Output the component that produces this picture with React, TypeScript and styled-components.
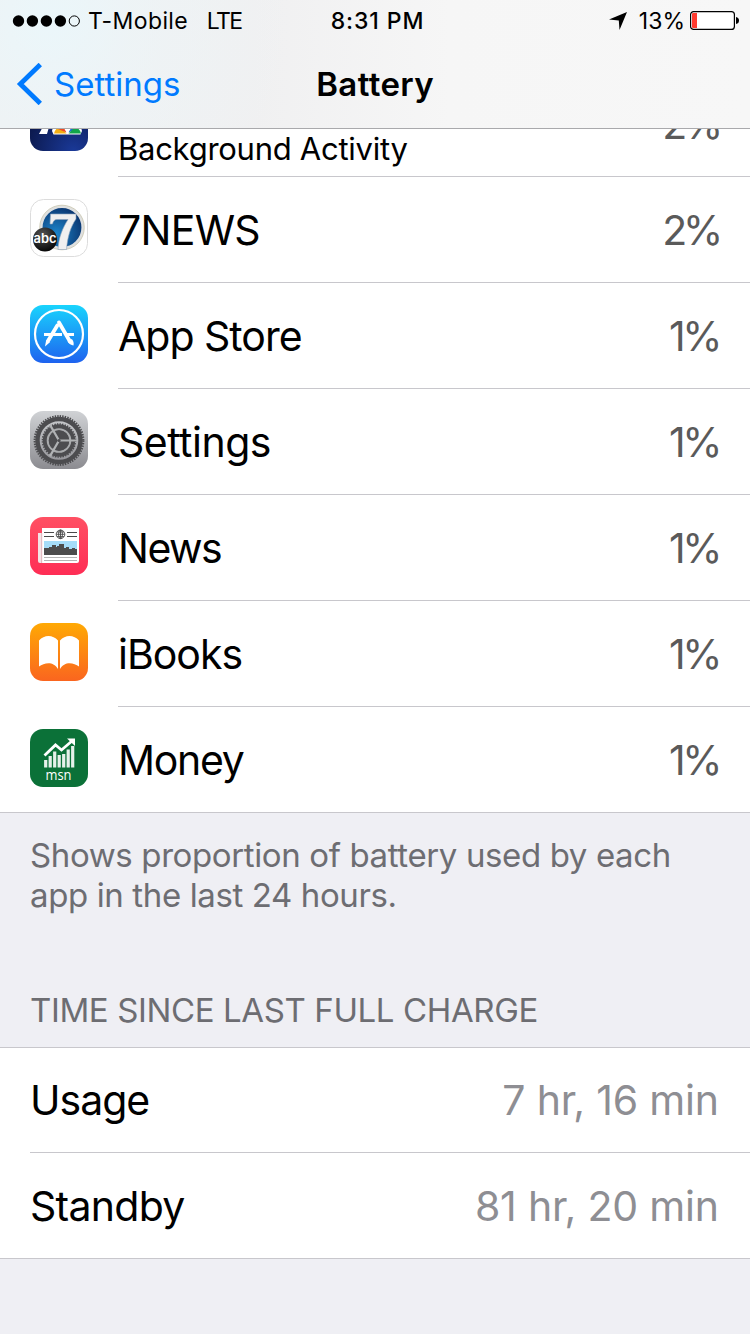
import React from "react";
import styled, { createGlobalStyle } from "styled-components";

const GlobalStyle = createGlobalStyle`
	* {
		box-sizing: border-box;
	}
	body {
		margin: 0;
		background: #efeff4;
	}
`;

const Screen = styled.div`
	display: flex;
	flex-direction: column;
	width: 750px;
	height: 1334px;
	overflow: hidden;
	background: #efeff4;
	color: #000;
	font-family: Inter, "Liberation Sans", sans-serif;
	white-space: nowrap;
`;

const Header = styled.header`
	flex: none;
	height: 129px;
	border-bottom: 1px solid #a9a9ac;
	background: radial-gradient(
			circle at 50px 20px,
			rgba(234, 247, 251, 0.9) 0,
			rgba(236, 245, 248, 0.6) 90px,
			rgba(240, 240, 241, 0) 240px
		),
		linear-gradient(90deg, #f0f1f2 0, #f0f0f1 34%, #f6f6f6 60%, #f7f7f7 100%);
`;

const StatusBar = styled.div`
	display: grid;
	grid-template-columns: 1fr auto 1fr;
	align-items: center;
	height: 41px;
	padding: 0 11px 0 12px;
`;

const StatusGroup = styled.div<{ $end?: boolean }>`
	display: flex;
	align-items: center;
	justify-content: ${({ $end }) => ($end ? "flex-end" : "flex-start")};
`;

interface ILabel {
	readonly $size: number;
	readonly $track?: number;
	readonly $weight?: number;
	readonly $color?: string;
}

const Label = styled.span<ILabel>`
	font-size: ${({ $size }) => $size}px;
	font-weight: ${({ $weight = 400 }) => $weight};
	letter-spacing: ${({ $track = 0 }) => $track}px;
	margin-right: ${({ $track = 0 }) => -$track}px;
	color: ${({ $color = "inherit" }) => $color};
`;

const Carrier = styled(Label)`
	margin-left: 8px;
`;
const Network = styled(Label)`
	margin-left: 19px;
`;
const Clock = styled(Label)`
	margin: 0 0 0 4px;
`;
const Charge = styled(Label)`
	margin: 0 5px 0 12px;
`;

const NavBar = styled.nav`
	display: grid;
	grid-template-columns: 1fr auto 1fr;
	align-items: center;
	height: 86px;
	padding: 0 16px;
`;

const BackButton = styled.a`
	display: flex;
	align-items: center;
	gap: 12px;
	color: #007aff;
`;

const ListView = styled.section<{ $scrolled?: boolean }>`
	flex: none;
	display: flex;
	flex-direction: column;
	background: #fff;
	border-bottom: 1px solid #c8c7cc;
	border-top: ${({ $scrolled }) => ($scrolled ? "none" : "1px solid #c8c7cc")};
	height: ${({ $scrolled }) => ($scrolled ? "684px" : "212px")};
	justify-content: flex-end;
	overflow: hidden;
`;

const Row = styled.div`
	flex: none;
	display: flex;
	height: 106px;
	padding-left: 30px;
	&:last-child {
		height: 105px;
	}
`;

const TimeRow = styled(Row)`
	height: 105px;
`;

const RowIcon = styled.svg`
	flex: none;
	width: 58px;
	height: 58px;
	margin: 22px 30px 0 0;
`;

const RowBody = styled.div`
	flex: 1;
	display: flex;
	align-items: center;
	justify-content: space-between;
	padding-right: 31px;
	border-bottom: 1px solid #c8c7cc;
	${Row}:last-child & {
		border-bottom: none;
	}
`;

const Percent = styled(Label)`
	margin-right: 0;
`;

const Subtitle = styled(Label)`
	align-self: flex-end;
	padding-bottom: 9px;
`;

const Footer = styled.p`
	flex: none;
	height: 176px;
	margin: 0;
	padding: 22px 30px 0;
	font-size: 33px;
	letter-spacing: -0.38px;
	line-height: 40px;
	color: #6d6d72;
`;

const SectionTitle = styled.h2`
	flex: none;
	height: 58px;
	margin: 0;
	padding: 1px 0 0 30px;
	font-size: 33px;
	font-weight: 400;
	letter-spacing: -0.38px;
	line-height: 40px;
	color: #6d6d72;
`;

const Tile = ({ id, from, to }: { id: string; from: string; to: string }) => (
	<>
		<defs>
			<linearGradient id={id} x1="0" y1="0" x2="0" y2="1">
				<stop offset="0" stopColor={from} />
				<stop offset="1" stopColor={to} />
			</linearGradient>
		</defs>
		<rect width="58" height="58" rx="13" fill={`url(#${id})`} />
	</>
);

const NewsChannelIcon = () => (
	<RowIcon viewBox="0 0 58 58">
		<defs>
			<radialGradient id="channel" cx=".75" cy="1" r=".8">
				<stop offset="0" stopColor="#1a3998" />
				<stop offset="1" stopColor="#0c1a50" />
			</radialGradient>
		</defs>
		<rect width="58" height="58" rx="13" fill="url(#channel)" />
		<path d="M8 20h15l-6 21H9l8-15H8z" fill="#fff" />
		<path d="M22 38l3-12h24l3 12-1.500 3.500h-27z" fill="#fff" />
		<path d="M24 40.500q1-5 6-6.500l6.500 6.500z" fill="#f5b013" />
		<path d="M25.500 35q1-4 4.500-7l6.500 11.500z" fill="#ee4a23" />
		<path d="M49.500 35q-1-4-4.500-7l-6.500 11.500z" fill="#1671d0" />
		<path d="M38.500 40.500L45 34q5 1.500 6 6.500z" fill="#12a64b" />
	</RowIcon>
);

const SevenNewsIcon = () => (
	<RowIcon viewBox="0 0 58 58">
		<defs>
			<radialGradient id="sevenDisc" cx=".35" cy=".65" r=".65">
				<stop offset="0" stopColor="#1d86cc" />
				<stop offset="1" stopColor="#0b3974" />
			</radialGradient>
			<radialGradient id="abcDisc" cx=".4" cy=".3" r=".7">
				<stop offset="0" stopColor="#555" />
				<stop offset="1" stopColor="#080808" />
			</radialGradient>
		</defs>
		<rect x=".5" y=".5" width="57" height="57" rx="13" fill="#fff" stroke="#dcdcdc" />
		<circle cx="32" cy="28.500" r="21" fill="url(#sevenDisc)" />
		<circle cx="32" cy="28.500" r="20.800" fill="none" stroke="#dfe0e0" strokeWidth="2.800" />
		<circle cx="32" cy="28.500" r="22.300" fill="none" stroke="#c3bfa4" strokeWidth=".7" />
		<path
			d="M20.500 15H46v5C40.500 28 37.500 38 36.500 50.500h-8.500C28.500 39 32.500 29 38 20.500H27c-2.500 0-3.800 1.500-4.500 4.500H20z"
			fill="#f0f0f0"
			stroke="#8fa3ba"
			strokeWidth=".6"
		/>
		<circle cx="15" cy="40.500" r="12" fill="url(#abcDisc)" />
		<text
			x="3.500"
			y="44"
			fontFamily="Inter"
			fontSize="13"
			fontWeight="600"
			fill="#fff"
			textLength="23"
			lengthAdjust="spacingAndGlyphs"
		>
			abc
		</text>
	</RowIcon>
);

const AppStoreIcon = () => (
	<RowIcon viewBox="0 0 58 58">
		<Tile id="store" from="#19d4fd" to="#1e62ef" />
		<g fill="none" stroke="#fff">
			<circle cx="29" cy="29" r="24" strokeWidth="2.200" />
			<path d="M14 29.500h18M37 29.500H44" strokeWidth="3" />
			<path d="M29 17.500L40 36.500" strokeWidth="3.800" strokeLinecap="round" />
			<path d="M27.300 20.500L18 36" strokeWidth="3.800" strokeLinecap="round" />
		</g>
		<path d="M16.200 35l3.700 2.200L15 41.500z" fill="#fff" />
		<path d="M37.500 36.500l4.300-2.500c1.700 2 2.200 4 1.700 6.500-2.500-.5-4.500-1.500-6-4z" fill="#fff" />
	</RowIcon>
);

const SettingsIcon = () => (
	<RowIcon viewBox="0 0 58 58">
		<Tile id="gear" from="#d0d2d5" to="#8c8c91" />
		<g fill="none" stroke="#4c4c4f">
			<circle cx="29" cy="29.500" r="24.300" strokeWidth="2.200" strokeDasharray="1.450 1.094" />
			<circle cx="29" cy="29.500" r="21.500" strokeWidth="4.400" />
			<circle cx="29" cy="29.500" r="13.700" strokeWidth="5" />
			<circle cx="29" cy="29.500" r="16.500" strokeWidth="1.600" strokeDasharray="1.400 1.192" />
		</g>
		<circle cx="29" cy="29.500" r="10.500" fill="#4c4c4f" />
		<circle cx="29" cy="29.500" r="11.500" fill="none" stroke="#aaacae" strokeWidth="1.600" />
		<path d="M29 29.500h18M29 29.500L20 13.900M29 29.500L20 45.100" stroke="#b0b2b4" strokeWidth="2.200" />
		<circle cx="29" cy="29.500" r="1.600" fill="#4c4c4f" />
	</RowIcon>
);

const NewsIcon = () => (
	<RowIcon viewBox="0 0 58 58">
		<Tile id="news" from="#ff5063" to="#fe2d55" />
		<path d="M8 16h4v30h-2q-2 0-2-2z" fill="#f3e4e6" />
		<path d="M12 11h37v33q0 2-2 2H12z" fill="#fff" />
		<path d="M11.700 16v30" stroke="#d9a4ad" strokeWidth=".8" />
		<path d="M14 15.500h10M14 19.500h10M37 15.500h10M37 19.500h10" stroke="#4a4a4a" />
		<g fill="none" stroke="#4a4a4a" strokeWidth=".9">
			<circle cx="30.500" cy="17.300" r="4.300" />
			<ellipse cx="30.500" cy="17.300" rx="2" ry="4.300" />
			<path d="M30.500 13v8.600M26.200 17.300h8.600M27 15h7M27 19.600h7" />
		</g>
		<path d="M14 24h33v14H14z" fill="#a5dcf8" />
		<path d="M14 31h5v-1h3v-2h4v2h1v-1h2v-2h5v4h2v-1h3v2h3v-1h3v1h2v6H14z" fill="#4c4c4c" />
		<path d="M14 40.500h33M14 43.500h33" stroke="#b5b5b5" />
	</RowIcon>
);

const BooksIcon = () => (
	<RowIcon viewBox="0 0 58 58">
		<Tile id="books" from="#ffa904" to="#fa651f" />
		<path
			d="M28 17.500C25.500 14.500 22 13 18.500 13S11.500 14.500 9 17.500V43.500C11.500 41.500 15 40.200 18.500 40.200S26 42 28 46z"
			fill="#fff"
		/>
		<path
			d="M30 17.500C32.500 14.500 36 13 39.500 13S46.500 14.500 49 17.500V43.500C46.500 41.500 43 40.200 39.500 40.200S32 42 30 46z"
			fill="#fff"
		/>
	</RowIcon>
);

const MoneyIcon = () => (
	<RowIcon viewBox="0 0 58 58">
		<rect width="58" height="58" rx="13" fill="#0b7138" />
		<path d="M14.500 26.500l11-10.500 6 5L42 12" fill="none" stroke="#fff" strokeWidth="2.800" />
		<path d="M37 9.500H45V17z" fill="#fff" />
		<path
			d="M15.700 38.500V31M20.200 38.500V27M24.700 38.500V22.500M29.200 38.500V26M33.700 38.500V25M38.200 38.500V20.500M42.700 38.500V17"
			stroke="#e6f1ea"
			strokeWidth="3.200"
		/>
		<text
			x="15.500"
			y="51"
			fontFamily="Open Sans"
			fontSize="14"
			fontWeight="500"
			fill="#fff"
			textLength="26"
			lengthAdjust="spacingAndGlyphs"
		>
			msn
		</text>
	</RowIcon>
);

const apps = [
	{ name: "7NEWS", usage: "2%", Icon: SevenNewsIcon, track: -0.7 },
	{ name: "App Store", usage: "1%", Icon: AppStoreIcon, track: -1 },
	{ name: "Settings", usage: "1%", Icon: SettingsIcon, track: -0.5 },
	{ name: "News", usage: "1%", Icon: NewsIcon, track: -1.5 },
	{ name: "iBooks", usage: "1%", Icon: BooksIcon, track: -1 },
	{ name: "Money", usage: "1%", Icon: MoneyIcon, track: -1.3 },
];

const times = [
	{ name: "Usage", value: "7 hr, 16 min", track: -1 },
	{ name: "Standby", value: "81 hr, 20 min", track: -0.7 },
];

function App() {
	return (
		<>
			<GlobalStyle />
			<Screen>
				<Header>
					<StatusBar>
						<StatusGroup>
							<svg width="68" height="12" viewBox="0 0 68 12">
								<circle cx="6.500" cy="6" r="5.700" />
								<circle cx="20.400" cy="6" r="5.700" />
								<circle cx="34.400" cy="6" r="5.700" />
								<circle cx="48.400" cy="6" r="5.700" />
								<circle cx="62.300" cy="6" r="5.100" fill="none" stroke="#000" />
							</svg>
							<Carrier $size={23} $track={0.4}>
								T-Mobile
							</Carrier>
							<Network $size={23} $track={-1.6}>
								LTE
							</Network>
						</StatusGroup>
						<Clock $size={23} $weight={500} $track={0.9}>
							8:31 PM
						</Clock>
						<StatusGroup $end>
							<svg width="18" height="18" viewBox="0 0 18 18">
								<path d="M18 0L10.500 18 9.800 8.500 0 7.500z" />
							</svg>
							<Charge $size={23}>13%</Charge>
							<svg width="49" height="19" viewBox="0 0 49 19">
								<rect x=".6" y=".6" width="43.800" height="17.800" rx="3" fill="#fff" stroke="#000" strokeWidth="1.200" />
								<path d="M2 3q0-1 1-1h4v15H3q-1 0-1-1z" fill="#ff3b30" />
								<path d="M46 6q3 .5 3 3.500T46 13z" />
							</svg>
						</StatusGroup>
					</StatusBar>
					<NavBar>
						<BackButton>
							<svg width="26" height="42" viewBox="0 0 26 42">
								<path d="M24.300 1.500L4.300 21l20 19.500" fill="none" stroke="currentColor" strokeWidth="4.800" />
							</svg>
							<Label $size={33}>Settings</Label>
						</BackButton>
						<Label $size={33} $weight={600} $track={0.4}>
							Battery
						</Label>
					</NavBar>
				</Header>
				<ListView $scrolled>
					<Row>
						<NewsChannelIcon />
						<RowBody>
							<Subtitle $size={31} $track={-0.27}>
								Background Activity
							</Subtitle>
							<Percent $size={41} $track={-4.2} $color="#5a5a5a">
								2%
							</Percent>
						</RowBody>
					</Row>
					{apps.map(({ name, usage, Icon, track }) => (
						<Row key={name}>
							<Icon />
							<RowBody>
								<Label $size={41} $track={track}>
									{name}
								</Label>
								<Percent $size={41} $track={usage === "2%" ? -4.2 : -3.5} $color="#5a5a5a">
									{usage}
								</Percent>
							</RowBody>
						</Row>
					))}
				</ListView>
				<Footer>
					Shows proportion of battery used by each
					<br />
					app in the last 24 hours.
				</Footer>
				<SectionTitle>TIME SINCE LAST FULL CHARGE</SectionTitle>
				<ListView>
					{times.map(({ name, value, track }) => (
						<TimeRow key={name}>
							<RowBody>
								<Label $size={41} $track={track}>
									{name}
								</Label>
								<Label $size={41} $track={-0.2} $color="#8e8e93">
									{value}
								</Label>
							</RowBody>
						</TimeRow>
					))}
				</ListView>
			</Screen>
		</>
	);
}

export default App;
